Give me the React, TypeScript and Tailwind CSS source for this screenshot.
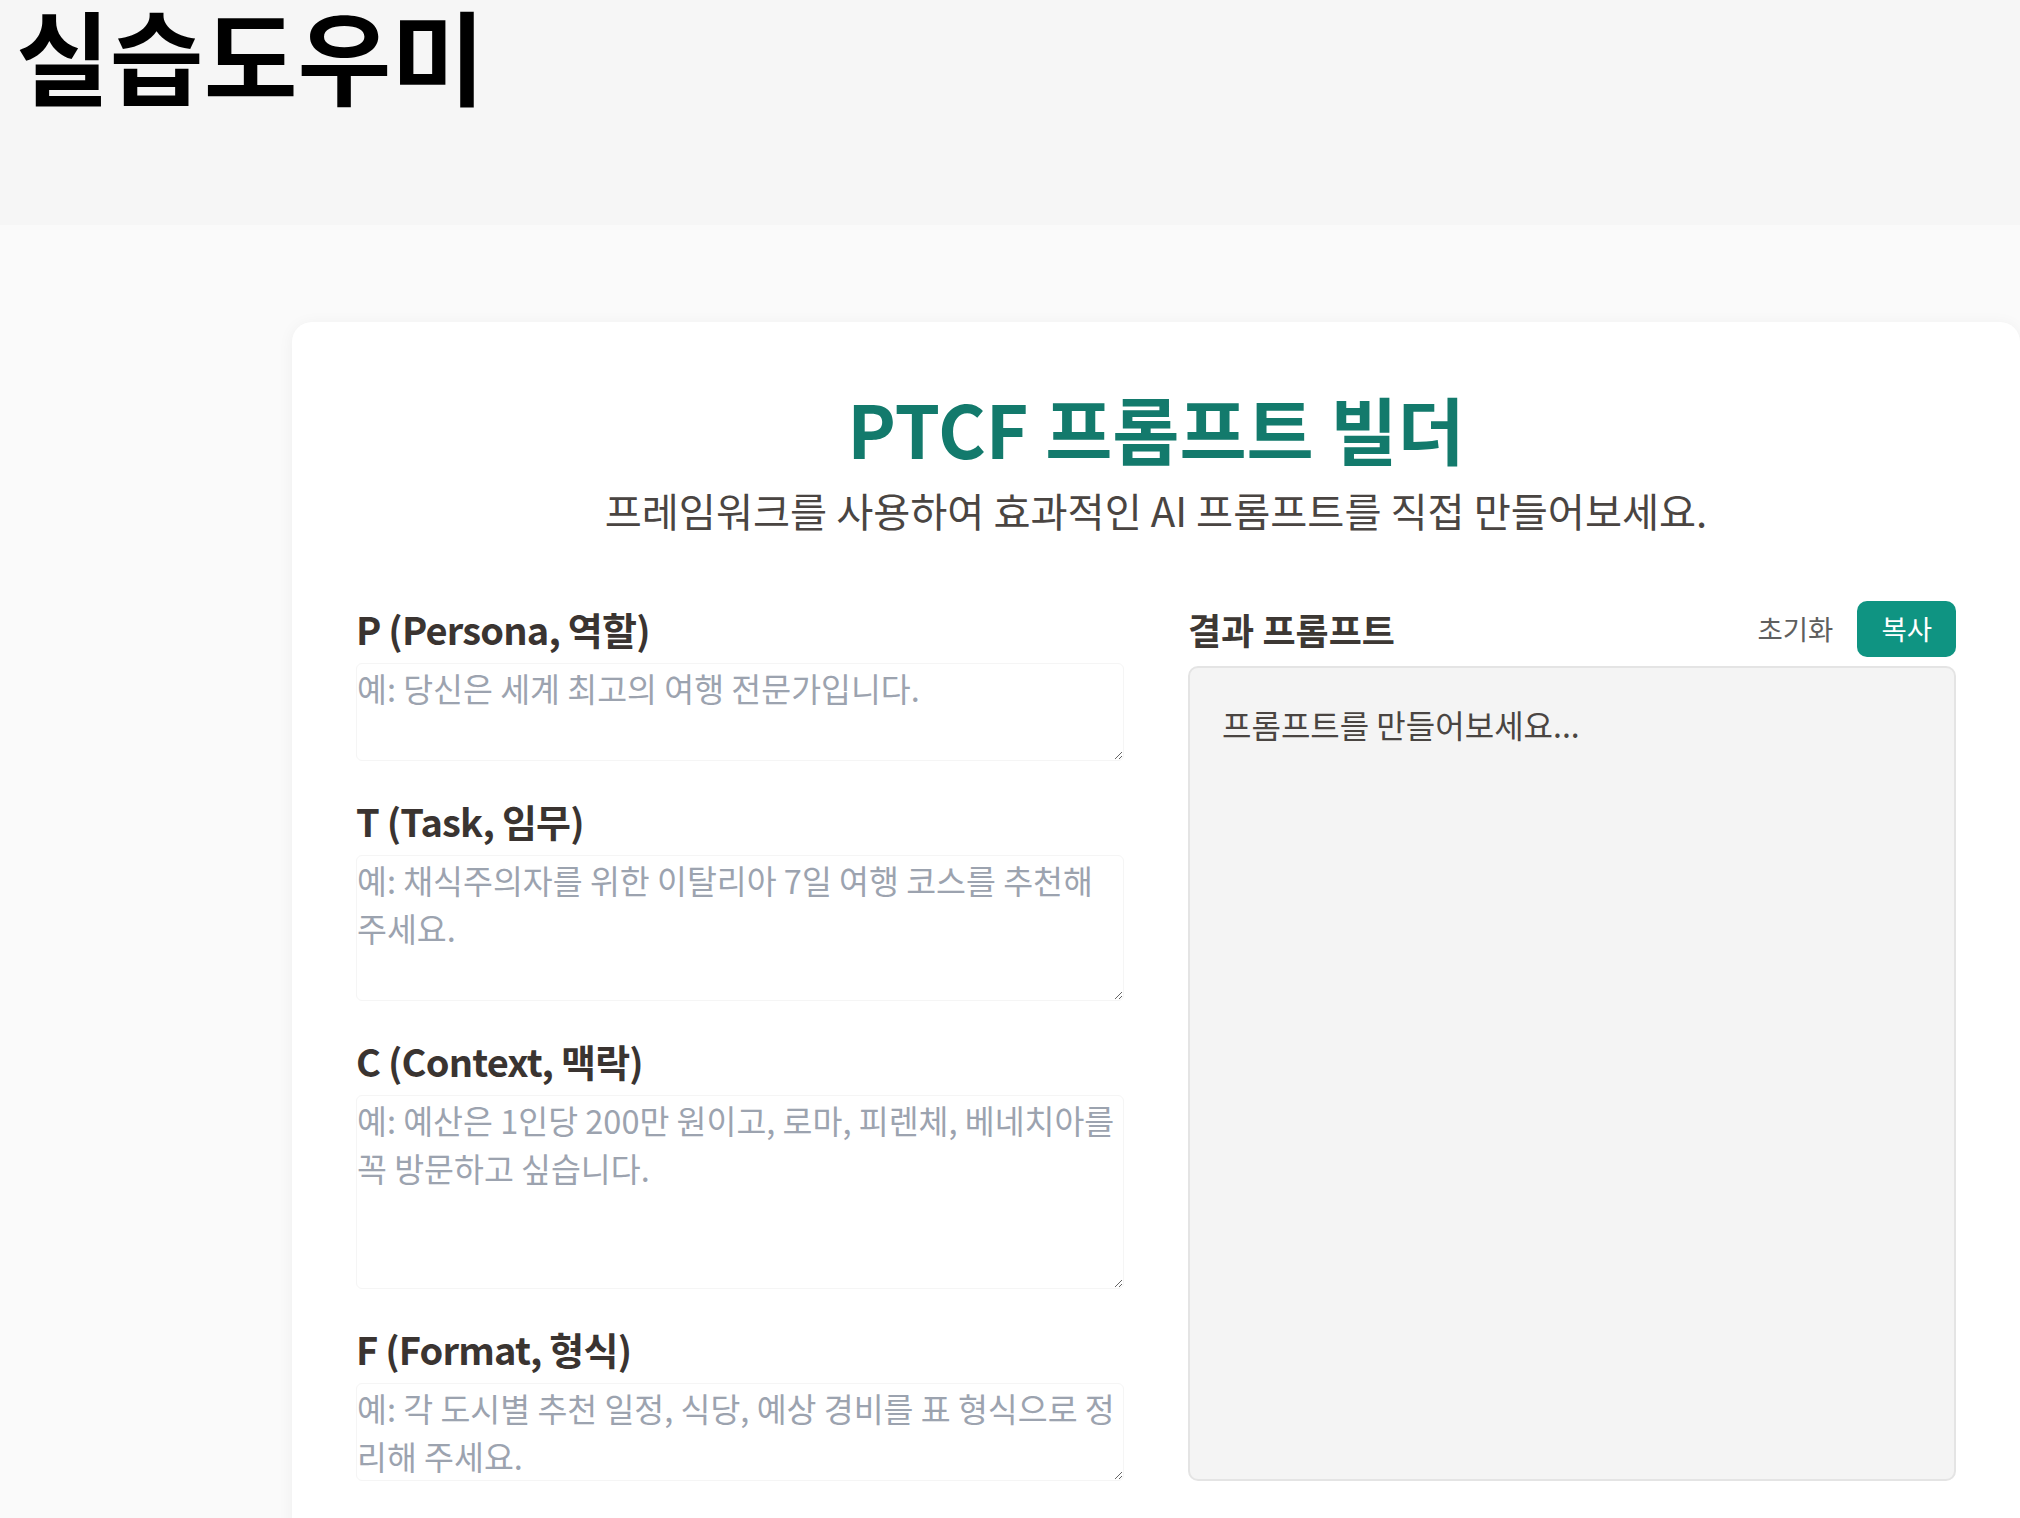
import React, { useState } from 'react';

const FIELDS = [
  { key: 'p', label: 'P (Persona, 역할)', rows: 2, placeholder: '예: 당신은 세계 최고의 여행 전문가입니다.' },
  { key: 't', label: 'T (Task, 임무)', rows: 3, placeholder: '예: 채식주의자를 위한 이탈리아 7일 여행 코스를 추천해 주세요.' },
  { key: 'c', label: 'C (Context, 맥락)', rows: 4, placeholder: '예: 예산은 1인당 200만 원이고, 로마, 피렌체, 베네치아를 꼭 방문하고 싶습니다.' },
  { key: 'f', label: 'F (Format, 형식)', rows: 2, placeholder: '예: 각 도시별 추천 일정, 식당, 예상 경비를 표 형식으로 정리해 주세요.' },
];

export default function App() {
  const [values, setValues] = useState<Record<string, string>>({ p: '', t: '', c: '', f: '' });

  const result = FIELDS.map((f) => values[f.key].trim()).filter(Boolean).join('\n\n');

  const reset = () => setValues({ p: '', t: '', c: '', f: '' });
  const copy = () => { if (result) navigator.clipboard?.writeText(result).catch(() => {}); };

  return (
    <div
      className="min-h-screen bg-[#fafafa] text-[#3d3834]"
      style={{ fontFamily: '"Noto Sans CJK KR", "Noto Sans", sans-serif' }}
    >
      <header className="h-[225px] bg-[#f6f6f6] px-4">
        <h1 className="pt-[3px] text-[102px] font-bold leading-none text-black">실습도우미</h1>
      </header>

      <main className="pt-[97px] pl-[292px]">
        <div className="w-[1728px] rounded-[20px] bg-white p-16 shadow-[0_2px_16px_rgba(0,0,0,0.05)]">
          <h2 className="text-center text-[73px] font-bold leading-[82px] text-[#137a6c]">PTCF 프롬프트 빌더</h2>
          <p className="mt-[14px] text-center text-[40.3px] leading-[56px] text-[#4a4542]">
            프레임워크를 사용하여 효과적인 AI 프롬프트를 직접 만들어보세요.
          </p>

          <div className="mt-[63px] grid grid-cols-2 gap-16">
            {/* Inputs */}
            <div className="flex flex-col gap-8">
              {FIELDS.map((f) => (
                <div key={f.key} className="flex flex-col">
                  <label htmlFor={f.key} className="mb-1.5 text-[38px] font-bold leading-[56px] tracking-[-0.8px] text-[#3a3431]">
                    {f.label}
                  </label>
                  <textarea
                    id={f.key}
                    rows={f.rows}
                    value={values[f.key]}
                    onChange={(e) => setValues({ ...values, [f.key]: e.target.value })}
                    placeholder={f.placeholder}
                    className="w-full rounded-md border border-[#f5f5f5] bg-white text-[32.5px] leading-[48px] text-[#3d3834] placeholder:text-[#9ca3af] focus:outline-none"
                  />
                </div>
              ))}
            </div>

            {/* Result */}
            <div className="flex flex-col">
              <div className="mb-[9px] flex h-[56px] items-center justify-between">
                <h3 className="text-[36px] font-bold text-[#3d3834]">결과 프롬프트</h3>
                <div className="flex items-center gap-6">
                  <button onClick={reset} className="text-[27.5px] text-[#5f5f5f]">초기화</button>
                  <button onClick={copy} className="h-[56px] rounded-[10px] bg-[#0f9482] px-6 text-[27.5px] text-white">복사</button>
                </div>
              </div>
              <div className="flex-1 rounded-[10px] border-2 border-[#e4e4e4] bg-[#f4f4f4] p-8 text-[32px] leading-[48px] whitespace-pre-wrap text-[#4a4542]">
                {result || '프롬프트를 만들어보세요...'}
              </div>
            </div>
          </div>
        </div>
      </main>
    </div>
  );
}
